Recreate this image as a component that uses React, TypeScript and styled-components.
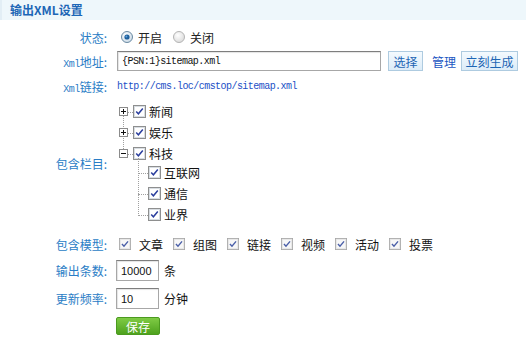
import React from "react";
import styled, { createGlobalStyle } from "styled-components";

const Global = createGlobalStyle`
  html, body { margin: 0; padding: 0; background: #fff; }
  body { font-family: "Noto Sans CJK SC", "Liberation Sans", sans-serif; font-size: 12px; color: #222; }
`;

const Page = styled.div`
  width: 526px;
  height: 338px;
  overflow: hidden;
  background: #fff;
`;

const Header = styled.div`
  height: 20px;
  line-height: 20px;
  background: #eef7fb;
  padding-left: 8px;
  font-weight: bold;
  font-size: 12px;
  color: #1c66b6;
  border-left: 2px solid #e2eef5;
`;

const Form = styled.div`
  display: flex;
  flex-direction: column;
`;

const Row = styled.div<{ $mt: number; $h: number }>`
  display: flex;
  align-items: center;
  margin-top: ${(p) => p.$mt}px;
  height: ${(p) => p.$h}px;
`;

const Label = styled.div`
  width: 107px;
  flex-shrink: 0;
  text-align: right;
  color: #2a7dc6;
  font-size: 12px;
  white-space: nowrap;
`;

const Field = styled.div`
  margin-left: 10px;
  display: flex;
  align-items: center;
  height: 100%;
`;

const Mono = styled.span`
  font-family: "Liberation Mono", monospace;
  font-size: 10px;
  letter-spacing: -0.55px;
`;

const RadioItem = styled.label<{ $ml: number }>`
  display: flex;
  align-items: center;
  margin-left: ${(p) => p.$ml}px;
  gap: 5px;
  color: #222;
`;

const TextInput = styled.div`
  box-sizing: border-box;
  width: 264px;
  height: 20px;
  border: 1px solid #a7a7a7;
  border-top-color: #7e7e7e;
  box-shadow: inset 1px 1px 1px #e4e4e4;
  display: flex;
  align-items: center;
  padding-left: 4px;
  color: #111;
`;

const BlueButton = styled.div<{ $ml: number; $w: number }>`
  box-sizing: border-box;
  margin-left: ${(p) => p.$ml}px;
  width: ${(p) => p.$w}px;
  height: 20px;
  border: 1px solid #aecbe0;
  background: linear-gradient(#f4fafe, #dcecf8);
  color: #1d65b4;
  display: flex;
  align-items: center;
  justify-content: center;
  font-size: 12px;
`;

const ManageLink = styled.span`
  margin-left: 9px;
  color: #1b56c2;
`;

const LinkText = styled(Mono)`
  color: #1b4fc6;
`;

const Tree = styled.div`
  position: relative;
  display: flex;
  flex-direction: column;
  margin-left: 2px;
  &::before {
    content: "";
    position: absolute;
    left: 4px;
    top: 10px;
    height: 42px;
    border-left: 1px dotted #a0a0a0;
  }
`;

const TreeRow = styled.div`
  display: flex;
  align-items: center;
  height: 21px;
`;

const HBranch = styled.span<{ $w: number }>`
  width: ${(p) => p.$w}px;
  border-top: 1px dotted #a0a0a0;
  margin-top: 1px;
`;

const Expander = styled.span`
  position: relative;
  z-index: 1;
  background: #fff;
  display: flex;
`;

const NodeText = styled.span`
  margin-left: 3px;
  color: #111;
  font-size: 12px;
`;

const ChildList = styled.div`
  position: relative;
  display: flex;
  flex-direction: column;
  margin-top: -2px;
  padding-left: 19px;
  &::before {
    content: "";
    position: absolute;
    left: 19px;
    top: -4px;
    height: 56px;
    border-left: 1px dotted #a0a0a0;
  }
`;

const ModelItem = styled.label`
  display: flex;
  align-items: center;
  margin-left: 2px;
  margin-right: 8px;
  gap: 8px;
  color: #111;
`;

const NumInput = styled.div`
  box-sizing: border-box;
  width: 43px;
  height: 21px;
  margin-left: -1px;
  border: 1px solid #a7a7a7;
  border-top-color: #7e7e7e;
  box-shadow: inset 1px 1px 1px #e4e4e4;
  display: flex;
  align-items: center;
  padding-left: 4px;
  font-family: "Liberation Sans", sans-serif;
  font-size: 11px;
  color: #111;
`;

const Unit = styled.span`
  margin-left: 5px;
  color: #111;
`;

const SaveButton = styled.div`
  box-sizing: border-box;
  margin-left: -1px;
  width: 44px;
  height: 18px;
  border: 1px solid #4b9a1f;
  border-radius: 2px;
  background: linear-gradient(#7fcb45, #4ea21e);
  color: #fff;
  display: flex;
  align-items: center;
  justify-content: center;
  font-size: 12px;
`;

const Radio = ({ checked }: { checked: boolean }) => (
  <svg width="12" height="12" viewBox="0 0 12 12">
    <defs>
      <radialGradient id={checked ? "rg1" : "rg0"} cx="0.4" cy="0.35" r="0.7">
        <stop offset="0" stopColor="#ffffff" />
        <stop offset="1" stopColor={checked ? "#c9d9e6" : "#d9d9d9"} />
      </radialGradient>
    </defs>
    <circle cx="6" cy="6" r="5.5" fill={`url(#${checked ? "rg1" : "rg0"})`} stroke={checked ? "#6b8aa3" : "#b4b4b4"} />
    {checked && <circle cx="6" cy="6" r="2.6" fill="#1e5f9c" />}
    {checked && <circle cx="5.4" cy="5.4" r="1" fill="#5fa2dc" />}
  </svg>
);

const Check = ({ size = 13, light = false }: { size?: number; light?: boolean }) => (
  <svg width={size} height={size} viewBox="0 0 13 13">
    <rect x="0.5" y="0.5" width="12" height="12" fill={light ? "#f7f7f7" : "#fff"} stroke={light ? "#a8a8a8" : "#8e8f8f"} />
    <rect x="1.5" y="1.5" width="10" height="10" fill="none" stroke={light ? "#e6e6e6" : "#d8dde2"} />
    <path d="M3.2 6.4 L5.4 8.8 L9.8 3.6" fill="none" stroke={light ? "#4a5fa8" : "#2b3f9e"} strokeWidth="1.5" />
  </svg>
);

const Box = ({ open }: { open: boolean }) => (
  <svg width="9" height="9" viewBox="0 0 9 9">
    <rect x="0.5" y="0.5" width="8" height="8" fill="#fff" stroke="#8b8b8b" />
    <path d="M2 4.5 H7" stroke="#111" strokeWidth="1" />
    {!open && <path d="M4.5 2 V7" stroke="#111" strokeWidth="1" />}
  </svg>
);

const models = ["文章", "组图", "链接", "视频", "活动", "投票"];

export default function App() {
  return (
    <Page>
      <Global />
      <Header>输出XML设置</Header>
      <Form>
        <Row $mt={7} $h={20}>
          <Label>状态:</Label>
          <Field>
            <RadioItem $ml={4}>
              <Radio checked />
              开启
            </RadioItem>
            <RadioItem $ml={11}>
              <Radio checked={false} />
              关闭
            </RadioItem>
          </Field>
        </Row>
        <Row $mt={4} $h={20}>
          <Label>
            <Mono>Xml</Mono>地址:
          </Label>
          <Field>
            <TextInput>
              <Mono>{"{PSN:1}sitemap.xml"}</Mono>
            </TextInput>
            <BlueButton $ml={7} $w={35}>选择</BlueButton>
            <ManageLink>管理</ManageLink>
            <BlueButton $ml={5} $w={57}>立刻生成</BlueButton>
          </Field>
        </Row>
        <Row $mt={5} $h={20}>
          <Label>
            <Mono>Xml</Mono>链接:
          </Label>
          <Field>
            <LinkText>http://cms.loc/cmstop/sitemap.xml</LinkText>
          </Field>
        </Row>
        <Row $mt={4} $h={126}>
          <Label>包含栏目:</Label>
          <Field>
            <Tree>
              {["新闻", "娱乐"].map((t) => (
                <TreeRow key={t}>
                  <Expander>
                    <Box open={false} />
                  </Expander>
                  <HBranch $w={5} />
                  <Check />
                  <NodeText>{t}</NodeText>
                </TreeRow>
              ))}
              <TreeRow>
                <Expander>
                  <Box open />
                </Expander>
                <HBranch $w={5} />
                <Check />
                <NodeText>科技</NodeText>
              </TreeRow>
              <ChildList>
                {["互联网", "通信", "业界"].map((t) => (
                  <TreeRow key={t}>
                    <HBranch $w={10} />
                    <Check />
                    <NodeText>{t}</NodeText>
                  </TreeRow>
                ))}
              </ChildList>
            </Tree>
          </Field>
        </Row>
        <Row $mt={8} $h={20}>
          <Label>包含模型:</Label>
          <Field>
            {models.map((m) => (
              <ModelItem key={m}>
                <Check size={12} light />
                {m}
              </ModelItem>
            ))}
          </Field>
        </Row>
        <Row $mt={6} $h={21}>
          <Label>输出条数:</Label>
          <Field>
            <NumInput>10000</NumInput>
            <Unit>条</Unit>
          </Field>
        </Row>
        <Row $mt={7} $h={21}>
          <Label>更新频率:</Label>
          <Field>
            <NumInput>10</NumInput>
            <Unit>分钟</Unit>
          </Field>
        </Row>
        <Row $mt={8} $h={18}>
          <Label />
          <Field>
            <SaveButton>保存</SaveButton>
          </Field>
        </Row>
      </Form>
    </Page>
  );
}
